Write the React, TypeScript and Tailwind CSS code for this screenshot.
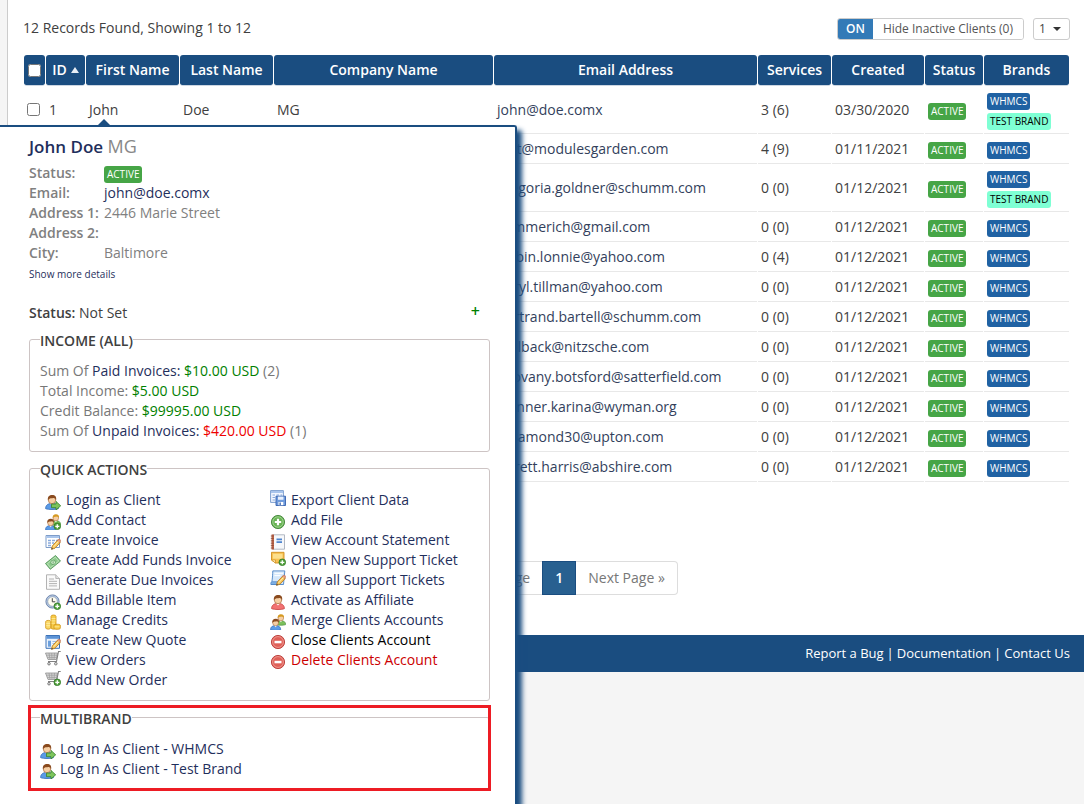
import type { ReactNode } from "react";

type Client = {
  id: number;
  email: string;
  services: string;
  created: string;
  first?: string;
  last?: string;
  company?: string;
  testBrand?: boolean;
};

const clients: Client[] = [
  { id: 1, first: "John", last: "Doe", company: "MG", email: "john@doe.comx", services: "3 (6)", created: "03/30/2020", testBrand: true },
  { id: 2, email: "test@modulesgarden.com", services: "4 (9)", created: "01/11/2021" },
  { id: 3, email: "gregoria.goldner@schumm.com", services: "0 (0)", created: "01/12/2021", testBrand: true },
  { id: 4, email: "kemmerich@gmail.com", services: "0 (0)", created: "01/12/2021" },
  { id: 5, email: "tarbin.lonnie@yahoo.com", services: "0 (4)", created: "01/12/2021" },
  { id: 6, email: "daryl.tillman@yahoo.com", services: "0 (0)", created: "01/12/2021" },
  { id: 7, email: "bertrand.bartell@schumm.com", services: "0 (0)", created: "01/12/2021" },
  { id: 8, email: "hollback@nitzsche.com", services: "0 (0)", created: "01/12/2021" },
  { id: 9, email: "geovany.botsford@satterfield.com", services: "0 (0)", created: "01/12/2021" },
  { id: 10, email: "trunner.karina@wyman.org", services: "0 (0)", created: "01/12/2021" },
  { id: 11, email: "rosamond30@upton.com", services: "0 (0)", created: "01/12/2021" },
  { id: 12, email: "jarrett.harris@abshire.com", services: "0 (0)", created: "01/12/2021" },
];

function Svg({ children }: { children: ReactNode }) {
  return (
    <svg viewBox="0 0 16 16" className="size-4 shrink-0" aria-hidden="true">
      {children}
    </svg>
  );
}

function Person({ body, edge, hair = "#8a4b1f" }: { body: string; edge: string; hair?: string }) {
  return (
    <>
      <path d="M.600 14.600c0-3.400 2.400-5.200 6.400-5.200s6.400 1.800 6.400 5.200c-2 1.200-10.800 1.200-12.800 0z" fill={body} stroke={edge} strokeWidth=".8" />
      <path d="M5 9.200 7 11.600l2.100-2.400z" fill="#fff" />
      <circle cx="7" cy="6" r="3.700" fill="#f6cfa4" stroke="#a8683a" strokeWidth=".7" />
      <path d="M2.900 6.200C2.400 2.700 4.300 1 7.200 1s4.600 1.800 3.900 5.200c-.6-1.600-1.300-2-2.300-2.200C7 4.400 4.300 3.800 2.900 6.200z" fill={hair} />
    </>
  );
}

function Plus() {
  return (
    <>
      <circle cx="12.300" cy="12.300" r="3.300" fill="#55a33e" stroke="#2f7a24" strokeWidth=".8" />
      <path d="M12.300 10.300v4M10.300 12.300h4" stroke="#fff" strokeWidth="1.300" />
    </>
  );
}

function Pencil() {
  return (
    <>
      <path d="m6.500 15.300.900-3.500 5.300-5.700 2.600 2.400-5.300 5.700z" fill="#f8c65a" stroke="#b5761c" strokeWidth=".8" />
      <path d="m12.300 6.500 1.100-1.200c.8-.8 3 .9 2.200 2l-.900 1.200z" fill="#e89a7a" stroke="#a9634a" strokeWidth=".5" />
      <path d="m8.600 12.800 5-5.500" stroke="#fff0b8" strokeWidth=".9" />
      <path d="m6.300 15.600.500-1.900 1.400 1.300z" fill="#444" />
    </>
  );
}

function LoginIcon() {
  return (
    <Svg>
      <Person body="#5b9be6" edge="#2d68b8" />
      <path d="M6.500 10h4.500V7.400l4.700 4.400L11 16v-2.300H6.500z" fill="#7cc45c" stroke="#35802a" strokeWidth=".8" />
    </Svg>
  );
}

function PeopleIcon({ plus = false }: { plus?: boolean }) {
  return (
    <Svg>
      <g transform="translate(5.500 -.500) scale(.76)">
        <Person body="#7cc05c" edge="#3f8634" hair="#d69a20" />
      </g>
      <g transform="translate(0 4) scale(.8)">
        <Person body="#5b9be6" edge="#2d68b8" />
      </g>
      {plus && <Plus />}
    </Svg>
  );
}

function InvoiceIcon() {
  return (
    <Svg>
      <path d="M1 1.500h13.500v12H1z" fill="#fff" stroke="#7d9cc9" />
      <path d="M1.500 2h12.500v2H1.500z" fill="#a9c5ec" />
      <path d="M3 6.500h3M7 6.500h3M11 6.500h2M3 9h3M7 9h2M3 11.500h3" stroke="#8aabdb" strokeWidth="1.300" />
      <Pencil />
    </Svg>
  );
}

function MoneyIcon() {
  return (
    <Svg>
      <path d="M.500 9.500 10.500 1.500l5 5.600L5.300 15.300z" fill="#8dca8c" stroke="#458c4b" strokeWidth=".8" />
      <path d="m2.400 9.700 7.900-6.500 3.400 3.900-8.200 6.500z" fill="none" stroke="#c9eac5" strokeWidth=".8" />
      <ellipse cx="8.100" cy="8.400" rx="2.300" ry="2.300" fill="#d7f0d2" stroke="#4b9651" strokeWidth=".7" />
      <path d="M8.100 7.200v2.500" stroke="#458c4b" strokeWidth=".8" />
    </Svg>
  );
}

function PageIcon() {
  return (
    <Svg>
      <path d="M1.500.800h9.300l3.700 3.700v10.800h-13z" fill="#fafafa" stroke="#aaa" strokeWidth=".9" />
      <path d="M10.800.800v3.700h3.700" fill="#e5e5e5" stroke="#aaa" strokeWidth=".8" />
      <path d="M4 5h5M4 7.300h8M4 9.600h8M4 11.900h8" stroke="#aaa" strokeWidth=".9" />
    </Svg>
  );
}

function ClockIcon() {
  return (
    <Svg>
      <circle cx="7.500" cy="7.500" r="6.600" fill="#b7c9e2" stroke="#6680a8" strokeWidth=".9" />
      <circle cx="7.500" cy="7.500" r="4.800" fill="#fffdf0" stroke="#7f93b2" strokeWidth=".7" />
      <path d="M7.300 4.200v3.600h3" fill="none" stroke="#444" />
      <Plus />
    </Svg>
  );
}

function CoinsIcon() {
  return (
    <Svg>
      <path d="M6 2.200c0-1.600 5-1.600 5 0V14c0 1.500-5 1.500-5 0z" fill="#f7cb49" stroke="#cf9417" strokeWidth=".8" />
      <path d="M.700 7.500c0-1.500 5-1.500 5 0V14c0 1.500-5 1.500-5 0z" fill="#fbd866" stroke="#cf9417" strokeWidth=".8" />
      <path d="M9 11.300c0-1.400 6.300-1.400 6.300 0v2.900c0 1.500-6.300 1.500-6.300 0z" fill="#f8ca45" stroke="#cf9417" strokeWidth=".8" />
      <path d="M6.500 4.600h4M6.500 6.900h4M6.500 9.200h3.500M1.200 9.400h4M1.200 11.700h4M9.500 12.800h5" stroke="#fff0a8" strokeWidth=".8" />
    </Svg>
  );
}

function QuoteIcon() {
  return (
    <Svg>
      <path d="M1 1.500h13.500v12.800H1z" fill="#eaf2fc" stroke="#3d73b8" />
      <path d="M1.500 2h12.500v2.800H1.500z" fill="#5c93d6" />
      <path d="M3 6.700h3v6H3z" fill="#6ca0dd" />
      <path d="M7.500 7.500H12M7.500 9.500h3" stroke="#9dbbe2" />
      <Pencil />
    </Svg>
  );
}

function CartIcon({ plus = false }: { plus?: boolean }) {
  return (
    <Svg>
      <path d="M.500 3h12l-1.200 6.500H3z" fill="#d6d6d6" stroke="#909090" strokeWidth=".8" />
      <path d="M1.500 5.200H12M2.300 7.400h9.200M4 3l1 6.500M6.700 3l.3 6.500M9.500 3 9 9.500" stroke="#999" strokeWidth=".7" />
      <path d="M15.700 1.500h-2.200L11.500 11.500H3" fill="none" stroke="#808080" strokeWidth="1.100" />
      <circle cx="4" cy="13.700" r="1.300" fill="#ddd" stroke="#666" strokeWidth=".8" />
      <circle cx="10.800" cy="13.700" r="1.300" fill="#ddd" stroke="#666" strokeWidth=".8" />
      {plus && <Plus />}
    </Svg>
  );
}

function ExportIcon() {
  return (
    <Svg>
      <path d="M.600.600h12.800v11.800H.600z" fill="#f2f7ff" stroke="#6f94c8" strokeWidth=".9" />
      <path d="M1 1h12v2H1z" fill="#a9c5ec" />
      <path d="M2.500 5h2.500M6.500 5h2.500M10.500 5H12M2.500 7.500h2.500M2.500 10h2.500" stroke="#8aabdb" strokeWidth="1.200" />
      <path d="M6 6.200h9.500v9.300H6z" fill="#6f9bdc" stroke="#3661ad" strokeWidth=".9" />
      <path d="M8 6.600h5.500v3.200H8z" fill="#e9f1fd" />
      <path d="M8.500 12h4.800v3.200H8.500z" fill="#fff" />
      <path d="M9.500 12.500h1.300v2.400H9.500z" fill="#3661ad" />
    </Svg>
  );
}

function AddIcon() {
  return (
    <Svg>
      <circle cx="8" cy="8" r="6.600" fill="#69b355" stroke="#43843a" strokeWidth=".9" />
      <circle cx="8" cy="8" r="5.200" fill="none" stroke="#a8d99a" strokeWidth=".8" />
      <path d="M8 4.800v6.400M4.800 8h6.400" stroke="#fff" strokeWidth="2.200" />
    </Svg>
  );
}

function StatementIcon() {
  return (
    <Svg>
      <path d="M2.500.800h12v14.400h-12z" fill="#f6f8fb" stroke="#aab0bb" strokeWidth=".9" />
      <path d="M1.500.500H4v15H1.500z" fill="#c2664a" />
      <path d="M.800 2h3M.800 4.400h3M.800 6.800h3M.800 9.200h3M.800 11.600h3M.800 14h3" stroke="#7a4433" strokeWidth=".7" />
      <path d="M6.500 4.500H12v1.700H6.500zM6.500 7.200H12v1.700H6.500z" fill="#4f85cf" />
    </Svg>
  );
}

function TicketIcon() {
  return (
    <Svg>
      <path d="M1.500 2.300h12.500v10.700H5.500l-4-3z" fill="#f8c253" stroke="#d08e1e" strokeWidth=".9" />
      <path d="M3 3.900h9.500v4.800H3z" fill="#fcdf8c" />
      <path d="M1.500 10h4v3z" fill="#fff2c4" stroke="#d08e1e" strokeWidth=".7" />
      <Plus />
    </Svg>
  );
}

function NoteIcon() {
  return (
    <Svg>
      <path d="M2.800.900h12L13.500 14.500H1c1-1.500 1.500-6.500 1.800-13.600z" fill="#d5e8fb" stroke="#4b83c4" strokeWidth=".9" />
      <path d="M1 14.500c-.6-1.300 0-2.800 1.400-2.800h6v2.800z" fill="#7fb0e4" stroke="#4b83c4" strokeWidth=".7" />
      <path d="M4.500 3.300h8.500M4.400 5.600h6" stroke="#fff" />
      <Pencil />
    </Svg>
  );
}

function AffiliateIcon() {
  return (
    <Svg>
      <g transform="translate(1 0)">
        <Person body="#f27272" edge="#c43a3a" />
      </g>
    </Svg>
  );
}

function StopIcon() {
  return (
    <Svg>
      <circle cx="8" cy="8" r="6.600" fill="#df6058" stroke="#b83a36" strokeWidth=".9" />
      <circle cx="8" cy="8" r="5.400" fill="none" stroke="#f3aaa3" strokeWidth=".7" />
      <path d="M4.500 6.800h7v2.500h-7z" fill="#fff" />
    </Svg>
  );
}

type Action = { label: string; icon: ReactNode; raised?: boolean; tone?: string };

const leftActions: Action[] = [
  { label: "Login as Client", icon: <LoginIcon /> },
  { label: "Add Contact", icon: <PeopleIcon plus /> },
  { label: "Create Invoice", icon: <InvoiceIcon /> },
  { label: "Create Add Funds Invoice", icon: <MoneyIcon /> },
  { label: "Generate Due Invoices", icon: <PageIcon /> },
  { label: "Add Billable Item", icon: <ClockIcon /> },
  { label: "Manage Credits", icon: <CoinsIcon /> },
  { label: "Create New Quote", icon: <QuoteIcon /> },
  { label: "View Orders", icon: <CartIcon />, raised: true },
  { label: "Add New Order", icon: <CartIcon plus />, raised: true },
];

const rightActions: Action[] = [
  { label: "Export Client Data", icon: <ExportIcon />, raised: true },
  { label: "Add File", icon: <AddIcon /> },
  { label: "View Account Statement", icon: <StatementIcon /> },
  { label: "Open New Support Ticket", icon: <TicketIcon />, raised: true },
  { label: "View all Support Tickets", icon: <NoteIcon />, raised: true },
  { label: "Activate as Affiliate", icon: <AffiliateIcon /> },
  { label: "Merge Clients Accounts", icon: <PeopleIcon /> },
  { label: "Close Clients Account", icon: <StopIcon />, tone: "text-black" },
  { label: "Delete Clients Account", icon: <StopIcon />, tone: "text-[#c00]" },
];

const brandActions: Action[] = [
  { label: "Log In As Client - WHMCS", icon: <LoginIcon /> },
  { label: "Log In As Client - Test Brand", icon: <LoginIcon /> },
];

function ActionList({ items, gap = "gap-1" }: { items: Action[]; gap?: string }) {
  return (
    <ul>
      {items.map((item) => (
        <li key={item.label}>
          <a href="#" className={`flex h-5 items-start whitespace-nowrap ${gap} ${item.tone ?? "text-[#1f2f5c]"}`}>
            <span className={item.raised ? "" : "pt-1"}>{item.icon}</span>
            {item.label}
          </a>
        </li>
      ))}
    </ul>
  );
}

function Badge({ tone, children }: { tone: string; children: ReactNode }) {
  return (
    <span className={`block w-fit rounded-[3px] px-[3px] text-[10px] leading-[17px] whitespace-nowrap ${tone}`}>
      {children}
    </span>
  );
}

function Panel({ title, children }: { title: string; children: ReactNode }) {
  return (
    <fieldset className="rounded-[3px] border border-[#cdc4c4] px-[10px] pt-[10px] pb-[10px]">
      <legend className="pt-1 leading-5 font-semibold text-[#404040]">{title}</legend>
      {children}
    </fieldset>
  );
}

function Detail({ label, children }: { label: string; children?: ReactNode }) {
  return (
    <div className="flex h-5">
      <dt className="w-[75px] shrink-0 font-semibold whitespace-nowrap">{label}</dt>
      <dd>{children}</dd>
    </div>
  );
}

function ClientPopup() {
  return (
    <aside
      aria-label="Client summary"
      className="absolute top-[125px] -bottom-4 left-0 w-[517px] rounded-tr-[3px] border-t-2 border-r-2 border-[#1a4d80] bg-white pr-[25px] pl-[29px] shadow-[5px_5px_5px_#1a4d80]"
    >
      <svg viewBox="0 0 12 6" className="absolute -top-2 left-[98px] h-[6px] w-3" aria-hidden="true">
        <path d="M0 6 6 0l6 6z" fill="#1a4d80" />
      </svg>
      <h2 className="h-[33px] pt-[6px] text-[17px] leading-[26px] font-semibold text-[#1f2f5c]">
        John Doe <span className="text-lg leading-[26px] font-normal text-[#888]">MG</span>
      </h2>
      <dl className="pt-[3px] text-[#808080]">
        <Detail label="Status:">
          <div className="pt-[3px]">
            <Badge tone="bg-[#46a546] text-white">ACTIVE</Badge>
          </div>
        </Detail>
        <Detail label="Email:">
          <a href="#" className="text-[#1f2f5c]">john@doe.comx</a>
        </Detail>
        <Detail label="Address 1:">2446 Marie Street</Detail>
        <Detail label="Address 2:" />
        <Detail label="City:">Baltimore</Detail>
      </dl>
      <a href="#" className="block pt-[3px] text-[10px] leading-4 text-[#1f2f5c]">Show more details</a>
      <div className="flex justify-between pt-[21px] pr-[10px] text-[#404040]">
        <p>
          <span className="font-semibold">Status:</span> Not Set
        </p>
        <button type="button" aria-label="Set status" className="h-4 text-base leading-4 font-semibold text-[#008000]">+</button>
      </div>
      <div className="flex flex-col gap-1 pt-1">
        <Panel title="INCOME (ALL)">
          <div className="text-[#777]">
            <p>Sum Of <a href="#" className="text-[#1f2f5c]">Paid Invoices:</a> <span className="text-[#008000]">$10.00 USD</span> (2)</p>
            <p>Total Income: <span className="text-[#008000]">$5.00 USD</span></p>
            <p>Credit Balance: <span className="text-[#008000]">$99995.00 USD</span></p>
            <p>Sum Of <a href="#" className="text-[#1f2f5c]">Unpaid Invoices:</a> <span className="text-[#e00]">$420.00 USD</span> (1)</p>
          </div>
        </Panel>
        <Panel title="QUICK ACTIONS">
          <div className="grid grid-cols-[225px_1fr] pl-[5px]">
            <ActionList items={leftActions} gap="gap-[5px]" />
            <ActionList items={rightActions} gap="gap-[5px]" />
          </div>
        </Panel>
        <div className="relative">
          <Panel title="MULTIBRAND">
            <ActionList items={brandActions} />
          </Panel>
          <div className="pointer-events-none absolute -inset-x-px top-0 -bottom-px border-3 border-[#ed1c24]" />
        </div>
      </div>
    </aside>
  );
}

function Th({ children }: { children: ReactNode }) {
  return (
    <th className="h-[31px] rounded-[3px] border-b border-[#ccd6e2] bg-[#1a4d80] bg-clip-padding p-0 text-center font-semibold text-white">
      {children}
    </th>
  );
}

const cell = "border-b border-[#e8e8e8] px-[3px] py-0";

export default function App() {
  return (
    <div className="relative min-h-screen overflow-hidden bg-[#f5f5f5] font-['Open_Sans','Noto_Sans',sans-serif] text-sm leading-5 text-[#404040]">
      <main className="ml-[7px] border-l border-[#ccc] bg-white pt-[18px] pr-[14px] pb-10 pl-[15px]">
        <div className="flex items-start justify-between">
          <p>12 Records Found, Showing 1 to 12</p>
          <div className="flex gap-[9px] text-xs">
            <button type="button" aria-pressed="true" className="flex h-[22px] overflow-hidden rounded-[3px] border border-[#ccc]">
              <span className="bg-[#337ab7] px-2 leading-5 font-semibold text-white">ON</span>
              <span className="bg-white px-[10px] leading-5 text-[#555]">Hide Inactive Clients (0)</span>
            </button>
            <div className="relative">
              <select aria-label="Page" className="h-[22px] w-[37px] appearance-none rounded-[3px] border border-[#ccc] bg-white pl-[5px] text-[#444]">
                <option>1</option>
              </select>
              <svg viewBox="0 0 8 4" className="pointer-events-none absolute top-[9px] right-[9px] h-1 w-2" aria-hidden="true">
                <path d="M0 0h8L4 4z" fill="#333" />
              </svg>
            </div>
          </div>
        </div>

        <table className="mt-[15px] w-full table-fixed border-separate border-spacing-x-px border-spacing-y-0">
          <colgroup>
            <col className="w-[21px]" />
            <col className="w-[39px]" />
            <col className="w-[93px]" />
            <col className="w-[93px]" />
            <col className="w-[219px]" />
            <col />
            <col className="w-[73px]" />
            <col className="w-[92px]" />
            <col className="w-[58px]" />
            <col className="w-[85px]" />
          </colgroup>
          <thead>
            <tr>
              <Th><input type="checkbox" aria-label="Select all clients" className="mx-auto block size-[13px]" /></Th>
              <Th>
                <span className="flex items-center justify-center gap-1">
                  ID
                  <svg viewBox="0 0 8 6" className="h-[6px] w-2" aria-hidden="true">
                    <path d="M4 0 8 6H0z" fill="#e8eef5" />
                  </svg>
                </span>
              </Th>
              <Th>First Name</Th>
              <Th>Last Name</Th>
              <Th>Company Name</Th>
              <Th>Email Address</Th>
              <Th>Services</Th>
              <Th>Created</Th>
              <Th>Status</Th>
              <Th>Brands</Th>
            </tr>
          </thead>
          <tbody>
            {clients.map((c) => (
              <tr key={c.id} className={c.testBrand ? "h-12" : "h-[30px]"}>
                <td className={cell}>
                  <input type="checkbox" aria-label={`Select client ${c.id}`} className="block size-[13px]" />
                </td>
                <td className={cell}>{c.first && <a href="#">{c.id}</a>}</td>
                <td className={cell}><a href="#">{c.first}</a></td>
                <td className={cell}><a href="#">{c.last}</a></td>
                <td className={cell}>{c.company}</td>
                <td className={cell}><a href="#" className="text-[#333f5c]">{c.email}</a></td>
                <td className={cell}>{c.services}</td>
                <td className={cell}>{c.created}</td>
                <td className={cell}>
                  <div className="pt-[3px]"><Badge tone="bg-[#46a546] text-white">ACTIVE</Badge></div>
                </td>
                <td className={cell}>
                  <div className="flex flex-col gap-[3px] pt-[3px]">
                    <Badge tone="bg-[#2062a3] text-white">WHMCS</Badge>
                    {c.testBrand && <Badge tone="bg-[#7fffd4] text-black">TEST BRAND</Badge>}
                  </div>
                </td>
              </tr>
            ))}
          </tbody>
        </table>

        <nav aria-label="Pagination" className="mt-[79px] flex justify-center text-[#777]">
          <a href="#" className="rounded-l border border-r-0 border-[#ddd] px-3 py-[6px]">« Previous Page</a>
          <a href="#" aria-current="page" className="border border-[#1a4d80] bg-[#286090] px-3 py-[6px] font-semibold text-white">1</a>
          <a href="#" className="rounded-r border border-l-0 border-[#ddd] px-3 py-[6px]">Next Page »</a>
        </nav>
      </main>

      <footer className="flex justify-end gap-[3px] bg-[#1a4d80] py-2 pr-[14px] text-[13px] leading-[21px] text-white">
        <a href="#">Report a Bug</a>
        <span>|</span>
        <a href="#">Documentation</a>
        <span>|</span>
        <a href="#">Contact Us</a>
      </footer>

      <ClientPopup />
    </div>
  );
}
